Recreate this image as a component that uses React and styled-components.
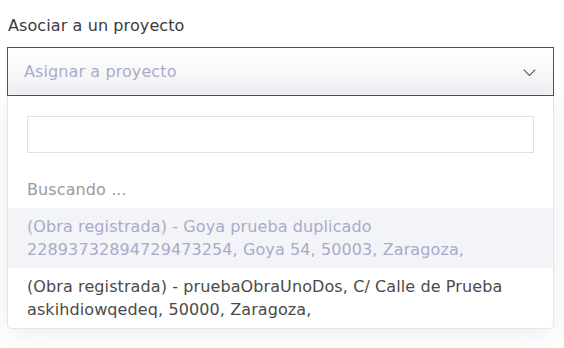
import React from "react";
import styled, { createGlobalStyle } from "styled-components";

const GlobalStyle = createGlobalStyle`
  html, body { margin: 0; padding: 0; background: #ffffff; }
  body { font-family: "DejaVu Sans", "Open Sans", sans-serif; }
`;

const Page = styled.div`
  width: 564px;
  height: 348px;
  box-sizing: border-box;
  padding: 16px 10px 0 7px;
  background: #ffffff;
  overflow: hidden;
`;

const Field = styled.div`
  display: flex;
  flex-direction: column;
  width: 547px;
`;

const Label = styled.label`
  font-size: 16px;
  letter-spacing: 0.1px;
  line-height: 20px;
  color: #3b3b3b;
  padding-left: 1px;
  margin-bottom: 11px;
`;

const SelectBox = styled.div`
  box-sizing: border-box;
  height: 49px;
  display: flex;
  align-items: center;
  justify-content: space-between;
  padding: 0 17px 0 16px;
  border: 1px solid #1d5aa8;
  background: linear-gradient(180deg, #ffffff 0%, #f1f1f5 100%);
`;

const Placeholder = styled.span`
  font-size: 16px;
  letter-spacing: 0.1px;
  color: #aaacc6;
  line-height: 20px;
  margin-top: 1px;
`;

const Chevron = styled.svg`
  width: 13px;
  height: 8px;
  margin-top: 3px;
`;

const Panel = styled.div`
  box-sizing: border-box;
  border: 1px solid #e3e4ec;
  border-top: none;
  border-radius: 0 0 5px 5px;
  background: #ffffff;
  box-shadow: 0 6px 30px rgba(50, 50, 90, 0.09);
  display: flex;
  flex-direction: column;
`;

const SearchWrap = styled.div`
  padding: 20px 19px 0 19px;
`;

const SearchInput = styled.input`
  box-sizing: border-box;
  display: block;
  width: 100%;
  height: 37px;
  border: 1px solid #dfe0ea;
  border-radius: 0;
  background: #ffffff;
  outline: none;
  font-family: inherit;
  font-size: 15px;
`;

const Status = styled.div`
  padding: 27px 19px 8px 19px;
  font-size: 16px;
  letter-spacing: 0.1px;
  line-height: 20px;
  color: #9b9b9b;
`;

const Option = styled.div`
  box-sizing: border-box;
  min-height: 60px;
  padding: 7px 19px 6px 19px;
  font-size: 16px;
  letter-spacing: 0.1px;
  line-height: 23px;
  color: ${(p) => (p.$active ? "#a9abca" : "#4a4a4a")};
  background: ${(p) => (p.$active ? "#f3f4f8" : "#ffffff")};
  &:last-child {
    border-radius: 0 0 4px 4px;
  }
`;

const options = [
  {
    id: 1,
    text: "(Obra registrada) - Goya prueba duplicado 22893732894729473254, Goya 54, 50003, Zaragoza,",
    active: true,
  },
  {
    id: 2,
    text: "(Obra registrada) - pruebaObraUnoDos, C/ Calle de Prueba askihdiowqedeq, 50000, Zaragoza,",
    active: false,
  },
];

export default function App() {
  return (
    <Page>
      <GlobalStyle />
      <Field>
        <Label>Asociar a un proyecto</Label>
        <SelectBox>
          <Placeholder>Asignar a proyecto</Placeholder>
          <Chevron viewBox="0 0 13 8" fill="none">
            <path d="M0.7 0.7 L6.5 6.5 L12.3 0.7" stroke="#5a5a66" strokeWidth="1.1" />
          </Chevron>
        </SelectBox>
        <Panel>
          <SearchWrap>
            <SearchInput type="text" />
          </SearchWrap>
          <Status>Buscando ...</Status>
          {options.map((o) => (
            <Option key={o.id} $active={o.active}>
              {o.text}
            </Option>
          ))}
        </Panel>
      </Field>
    </Page>
  );
}
